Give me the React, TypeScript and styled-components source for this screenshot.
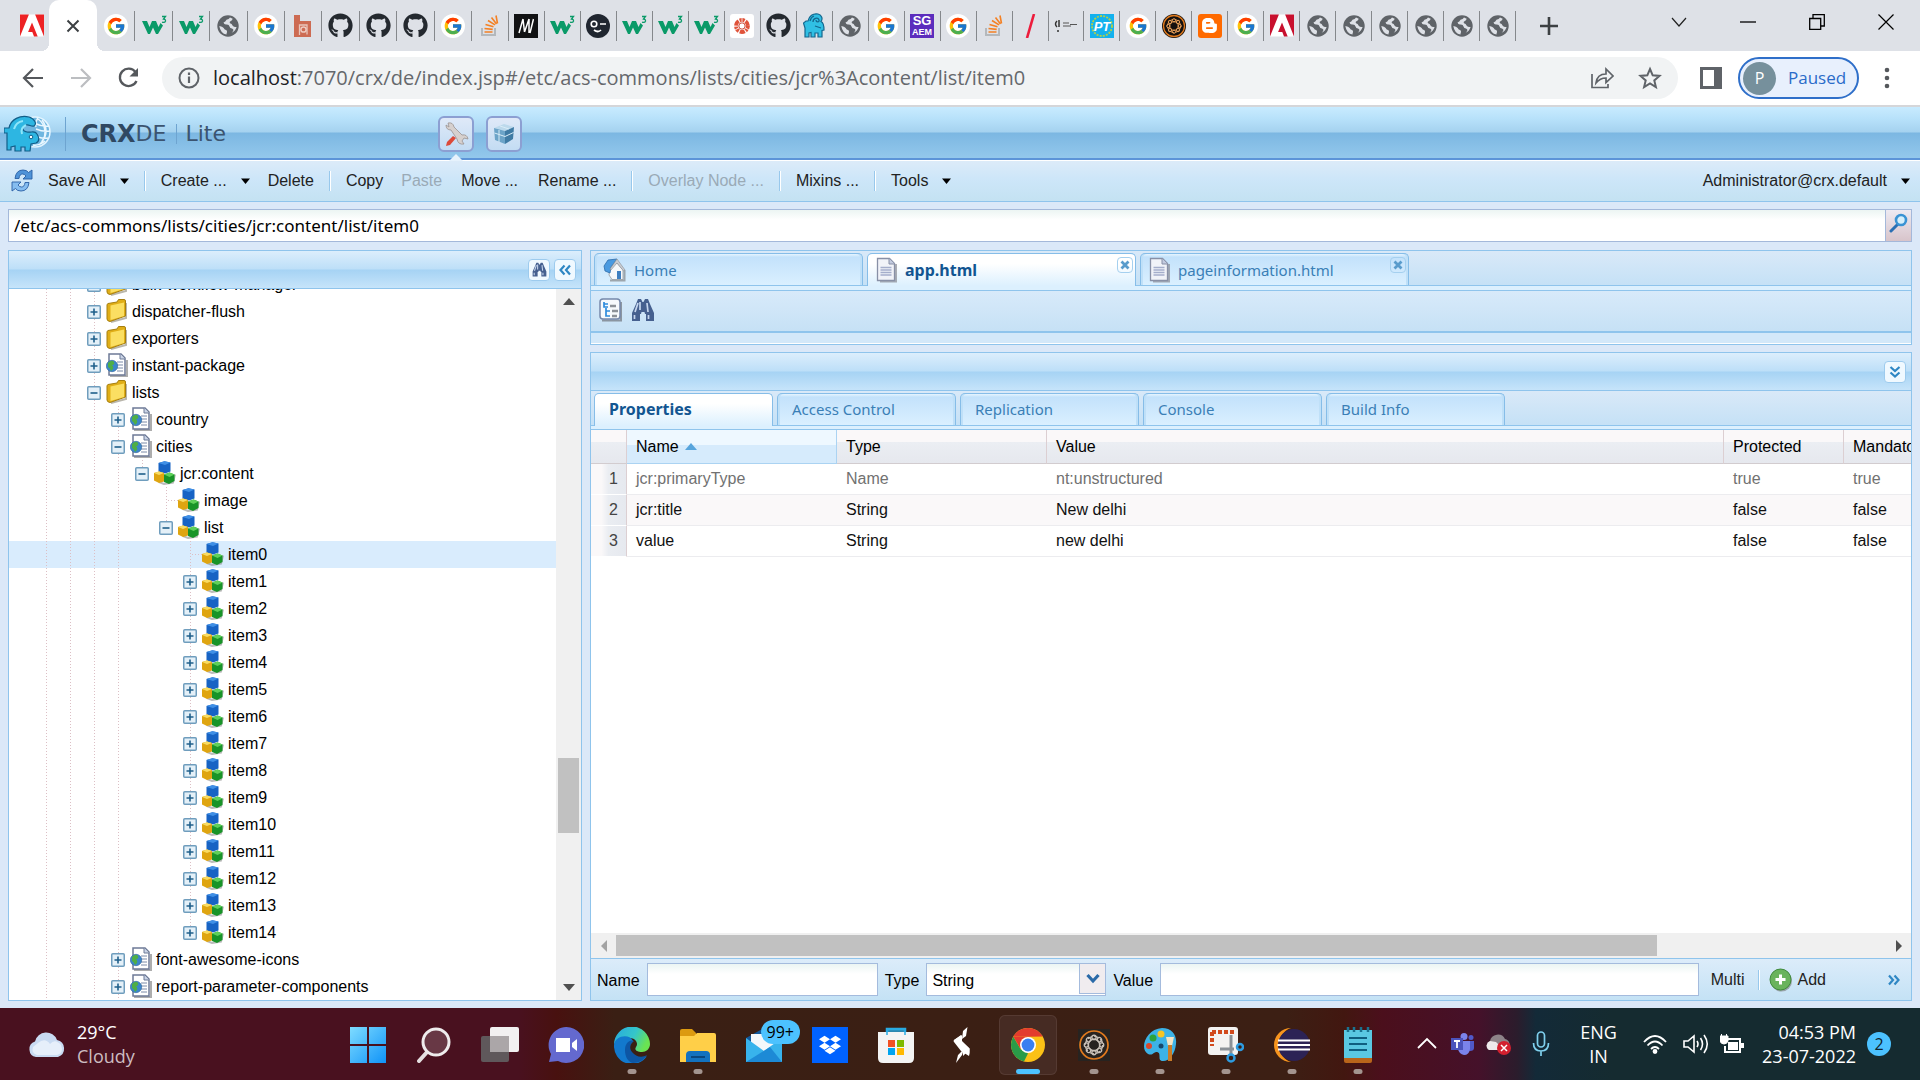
import React from "react";
import styled, { createGlobalStyle, css } from "styled-components";
import { FcGoogle } from "react-icons/fc";
import { FaGithub, FaBloggerB, FaDropbox } from "react-icons/fa";

const ARIAL = '"Liberation Sans", Arial, sans-serif';
const SEGOE = '"Open Sans", "Noto Sans", sans-serif';
const TAHOMA = '"Noto Sans", Tahoma, sans-serif';
const LINE = "#8fc4ec";

const GlobalStyle = createGlobalStyle`
  * { box-sizing: border-box; }
  html, body { margin: 0; padding: 0; }
  body { font-family: ${ARIAL}; font-size: 16px; color: #000; overflow: hidden; }
  button, input, select { font: inherit; color: inherit; margin: 0; }
  button { background: none; border: 0; padding: 0; cursor: pointer; }
  svg { display: block; flex: none; }
`;

const Screen = styled.div`
  display: flex;
  flex-direction: column;
  height: 100vh;
  background: #dbe8f8;
`;

/* ---------- browser chrome ---------- */

const TabStrip = styled.div`
  display: flex;
  flex: none;
  height: 51px;
  background: #dee1e7;
`;
const PinnedTab = styled.button`
  display: flex;
  justify-content: flex-end;
  align-items: center;
  width: 49px;
  padding-right: 5px;
`;
const ActiveTab = styled.div`
  position: relative;
  display: flex;
  align-items: center;
  justify-content: center;
  width: 48px;
  background: #fff;
  border-radius: 10px 10px 0 0;
  &::before,
  &::after {
    content: "";
    position: absolute;
    bottom: 0;
    width: 8px;
    height: 8px;
  }
  &::before {
    right: 100%;
    background: radial-gradient(circle at 0 0, transparent 8px, #fff 8px);
  }
  &::after {
    left: 100%;
    background: radial-gradient(circle at 100% 0, transparent 8px, #fff 8px);
  }
`;
const TabGroup = styled.div<{ $w: number }>`
  display: flex;
  flex: 0 1 ${(p) => p.$w}px;
  align-items: center;
`;
const BrowserTab = styled.button`
  display: flex;
  flex: 1 1 0;
  min-width: 0;
  height: 30px;
  align-items: center;
  justify-content: center;
  border-right: 1px solid #85888c;
  &:first-child {
    padding-left: 1px;
  }
`;
const NewTab = styled.button`
  display: flex;
  align-items: center;
  margin-left: 24px;
`;
const WindowControls = styled.div`
  display: flex;
  align-items: center;
  height: 43px;
  margin-left: auto;
`;
const WindowButton = styled.button`
  display: flex;
  width: 69px;
  height: 43px;
  align-items: center;
  justify-content: center;
`;
const Round = styled.span<{ $bg: string }>`
  display: flex;
  width: 24px;
  height: 24px;
  align-items: center;
  justify-content: center;
  border-radius: 50%;
  background: ${(p) => p.$bg};
`;
const Square = styled.span<{ $bg: string; $r?: number }>`
  display: flex;
  flex-direction: column;
  width: 24px;
  height: 24px;
  align-items: center;
  justify-content: center;
  border-radius: ${(p) => p.$r ?? 0}px;
  background: ${(p) => p.$bg};
  color: #fff;
  font: bold 13px/12px ${ARIAL};
`;
const SquareNote = styled.small`
  font: bold 9px/10px ${ARIAL};
`;

const AddressRow = styled.div`
  display: flex;
  flex: none;
  align-items: center;
  height: 56px;
  padding: 0 27px 0 21px;
  background: #fff;
  border-bottom: 2px solid #d5d6d9;
`;
const NavButtons = styled.div`
  display: flex;
  width: 141px;
  gap: 24px;
`;
const Omnibox = styled.div`
  display: flex;
  flex: 1;
  height: 42px;
  align-items: center;
  gap: 13px;
  padding: 0 16px;
  border-radius: 21px;
  background: #f1f3f4;
`;
const Url = styled.div`
  flex: 1;
  font: 20px/28px ${SEGOE};
  color: #65686c;
  white-space: nowrap;
`;
const UrlHost = styled.span`
  color: #202124;
`;
const OmniActions = styled.div`
  display: flex;
  gap: 24px;
`;
const Profile = styled.button`
  display: flex;
  align-items: center;
  gap: 12px;
  width: 121px;
  height: 42px;
  margin: 0 22px 0 16px;
  padding-left: 3px;
  border: 2px solid #2f6fc9;
  border-radius: 21px;
  background: #e8f0fd;
  color: #2a6bc9;
  font: 17px/24px ${SEGOE};
`;
const Avatar = styled.span`
  width: 33px;
  height: 33px;
  border-radius: 50%;
  background: #76909c;
  color: #fff;
  font: 16px/33px ${SEGOE};
  text-align: center;
`;
const SideIcon = styled.button`
  margin-left: 22px;
`;

/* ---------- CRXDE header ---------- */

const CrxHeader = styled.header`
  display: flex;
  flex: none;
  align-items: center;
  height: 53px;
  padding: 2px 4px 0;
  border-bottom: 2px solid #5c94d8;
  background: linear-gradient(#c8ebff 0, #b7e1fa 12px, #a5d2ef 25px, #7cb7e2 26px, #93c8ec 100%);
`;
const Brand = styled.div`
  display: flex;
  align-items: center;
  width: 434px;
  color: #3b5470;
  font: 22px/36px "DejaVu Sans", Verdana, sans-serif;
`;
const BrandStrong = styled.b`
  color: #2f4862;
  font-size: 24px;
`;
const BrandRule = styled.span<{ $h: number; $l: number; $r: number }>`
  width: 1px;
  height: ${(p) => p.$h}px;
  margin: 0 ${(p) => p.$r}px 0 ${(p) => p.$l}px;
  background: #6ea4d0;
`;
const ModeTile = styled.button<{ $on?: boolean }>`
  position: relative;
  display: flex;
  width: 36px;
  height: 36px;
  margin-right: 12px;
  align-items: center;
  justify-content: center;
  border: 2px solid #8c9fd2;
  border-radius: 6px;
  background: linear-gradient(#dfe9f8, #c3dcf3);
  ${(p) =>
    p.$on &&
    css`
      &::after {
        content: "";
        position: absolute;
        left: 9px;
        bottom: -11px;
        border: 7px solid transparent;
        border-top: 0;
        border-bottom-color: #e6f2fc;
      }
    `}
`;

const Toolbar = styled.div`
  display: flex;
  flex: none;
  align-items: center;
  height: 42px;
  padding: 0 10px;
  border-top: 1px solid #fff;
  border-bottom: 1px solid ${LINE};
  background: linear-gradient(#dcebf9, #cde6f9 45%, #c4e2f2);
`;
const ToolButton = styled.button<{ $l?: number; $r?: number }>`
  display: flex;
  align-items: center;
  gap: 14px;
  padding: 0 ${(p) => p.$r ?? 15}px 0 ${(p) => p.$l ?? 15}px;
  color: #222;
  font: 16px/24px ${ARIAL};
  white-space: nowrap;
  &:disabled {
    color: #9aaab6;
  }
`;
const Sep = styled.span`
  width: 2px;
  height: 20px;
  background: linear-gradient(90deg, #98c8ec 50%, #fff 50%);
`;
const Spacer = styled.span`
  flex: 1;
`;

const PathRow = styled.form`
  display: flex;
  flex: none;
  height: 33px;
  margin: 7px 8px 8px;
  border: 1px solid #a4b8da;
`;
const PathInput = styled.input`
  flex: 1;
  min-width: 0;
  border: 0;
  padding: 0 5px;
  outline: 0;
  background: linear-gradient(#ecf5f3, #fff 10px);
  font: 17px/24px ${TAHOMA};
`;
const PathGo = styled.button`
  display: flex;
  width: 26px;
  align-items: flex-start;
  justify-content: center;
  padding-top: 3px;
  border-left: 1px solid #a4b8da;
  background: linear-gradient(#edeaf2, #d8c4ca);
`;

/* ---------- work area ---------- */

const Work = styled.main`
  display: flex;
  flex: 1;
  min-height: 0;
  gap: 8px;
  padding: 0 8px 7px;
`;
const Panel = styled.section<{ $w?: number; $grow?: boolean }>`
  display: flex;
  flex-direction: column;
  min-width: 0;
  min-height: 0;
  ${(p) => p.$w && `flex: 0 0 ${p.$w}px;`}
  ${(p) => p.$grow && "flex: 1;"}
  border: 1px solid ${LINE};
`;
const PanelHeader = styled.div`
  display: flex;
  flex: none;
  align-items: center;
  justify-content: flex-end;
  gap: 4px;
  height: 38px;
  padding-right: 5px;
  border-bottom: 1px solid ${LINE};
  background: linear-gradient(#dceefc 0, #bddff8 18px, #a6d3f4 19px, #c6e4fa 100%);
`;
const HeaderTool = styled.button`
  display: flex;
  width: 22px;
  height: 22px;
  align-items: center;
  justify-content: center;
  border: 1px solid #9dcbee;
  border-radius: 4px;
  background: #f0f9ff;
`;
const TreeBody = styled.div`
  display: flex;
  flex: 1;
  min-height: 0;
  background: #fff;
`;
const TreeList = styled.ul`
  display: flex;
  flex: 1;
  flex-direction: column;
  justify-content: flex-end;
  overflow: hidden;
  margin: 0;
  padding: 0;
  list-style: none;
`;
const TreeRow = styled.li<{ $on?: boolean }>`
  display: flex;
  flex: none;
  height: 27px;
  align-items: center;
  padding-left: 25px;
  background: ${(p) => (p.$on ? "#d9ecfd" : "transparent")};
`;
const dots = "repeating-linear-gradient(#dcbfc5 0 1px, transparent 1px 3px)";
const Guide = styled.span<{ $line?: boolean; $half?: boolean }>`
  display: flex;
  flex: none;
  width: 24px;
  height: 27px;
  align-items: center;
  justify-content: center;
  background: ${(p) => (p.$line ? dots : "none")} 12px 0 / 1px ${(p) => (p.$half ? "14px" : "100%")} no-repeat;
`;
const Stub = styled.span`
  width: 10px;
  height: 1px;
  margin-left: 14px;
  background: repeating-linear-gradient(90deg, #dcbfc5 0 1px, transparent 1px 3px);
`;
const NodeIcon = styled.span`
  width: 24px;
  height: 26px;
`;
const NodeLabel = styled.a`
  margin-left: 2px;
  color: #000;
  text-decoration: none;
  font: 16px/24px ${ARIAL};
  white-space: nowrap;
`;
const VScroll = styled.div`
  display: flex;
  flex-direction: column;
  align-items: center;
  width: 25px;
  padding: 7px 0;
  background: #f0f0f0;
`;
const VTrack = styled.div<{ $f: number }>`
  flex: ${(p) => p.$f};
`;
const VThumb = styled.div`
  width: 21px;
  height: 75px;
  background: #c1c1c1;
`;

const RightColumn = styled.div`
  display: flex;
  flex: 1;
  flex-direction: column;
  min-width: 0;
  gap: 7px;
`;
const TabBar = styled.div`
  display: flex;
  flex: none;
  gap: 4px;
  padding: 2px 3px 0;
  border-bottom: 1px solid ${LINE};
  background: linear-gradient(#d9e9f8, #c5e1f6);
`;
const PageTab = styled.div<{ $on?: boolean; $w: number }>`
  display: flex;
  width: ${(p) => p.$w}px;
  height: ${(p) => (p.$on ? 33 : 32)}px;
  margin-bottom: ${(p) => (p.$on ? -1 : 0)}px;
  align-items: center;
  padding: 0 2px 0 8px;
  border: 1px solid #86bde8;
  border-bottom: 0;
  border-radius: 5px 5px 0 0;
  background: ${(p) =>
    p.$on ? "linear-gradient(#fff 30%, #dcf0fe)" : "linear-gradient(#e6f5ff 0, #c3e2fb 3px, #daf0ff)"};
  box-shadow: ${(p) => (p.$on ? "none" : "inset -2px 0 0 #bfe0f8, inset 2px 0 0 #bfe0f8")};
`;
const TabLabel = styled.button<{ $on?: boolean }>`
  display: flex;
  flex: 1;
  align-items: center;
  gap: 7px;
  color: ${(p) => (p.$on ? "#125591" : "#3a7fb6")};
  font: ${(p) => (p.$on ? "bold 16px" : "15px")}/24px ${TAHOMA};
  white-space: nowrap;
`;
const CloseTab = styled.button`
  display: flex;
  align-self: flex-start;
  width: 16px;
  height: 16px;
  margin-top: 3px;
  align-items: center;
  justify-content: center;
  border: 1px solid #a5d0ef;
  border-radius: 4px;
`;
const Strip = styled.div<{ $h: number }>`
  flex: none;
  height: ${(p) => p.$h}px;
  border-bottom: 1px solid ${LINE};
  background: #dcf0fe;
`;
const EditorTools = styled.div`
  display: flex;
  flex: none;
  height: 42px;
  align-items: center;
  gap: 8px;
  padding: 0 8px 2px;
  border-bottom: 2px solid ${LINE};
  background: linear-gradient(#d8eafa, #c6e1f5);
`;
const EditorRest = styled.div`
  height: 11px;
  border-bottom: 1px solid #fff;
  background: #d3e8f9;
`;

/* ---------- properties grid ---------- */

const GridArea = styled.div`
  flex: 1;
  min-height: 0;
  overflow: hidden;
  background: #fff;
`;
const Grid = styled.table`
  width: calc(100% + 53px);
  table-layout: fixed;
  border-collapse: separate;
  border-spacing: 0;
`;
const HeadCell = styled.th<{ $w?: number; $sorted?: boolean }>`
  width: ${(p) => (p.$w ? `${p.$w}px` : "auto")};
  height: 34px;
  padding: 1px 9px 0;
  border-right: 1px solid ${(p) => (p.$sorted ? "#abd3f2" : "#dccfd2")};
  border-bottom: 1px solid ${(p) => (p.$sorted ? "#abd3f2" : "#d2cccf")};
  background: ${(p) =>
    p.$sorted
      ? "linear-gradient(#eef8ff 45%, #d6ebfc 46%)"
      : "linear-gradient(#faf8f9 35%, #ebeef3 36%, #e6e8ee)"};
  font: 16px/24px ${ARIAL};
  text-align: left;
`;
const SortMark = styled.span`
  display: inline-block;
  margin-left: 6px;
  vertical-align: 2px;
  border: 6px solid transparent;
  border-top: 0;
  border-bottom: 7px solid #58a5dc;
`;
const GridRow = styled.tr<{ $alt?: boolean; $muted?: boolean }>`
  background: ${(p) => (p.$alt ? "#faf8f9" : "#fff")};
  color: ${(p) => (p.$muted ? "#717171" : "#111")};
`;
const Cell = styled.td`
  height: 31px;
  padding: 0 9px;
  border-bottom: 1px solid #ececef;
  font: 16px/24px ${ARIAL};
  white-space: nowrap;
`;
const NumCell = styled(Cell)`
  padding: 0 8px 0 0;
  border-right: 1px solid #dccfd2;
  border-bottom-color: #fff;
  background: linear-gradient(90deg, #faf8f9 30%, #eaedf2 50%, #e6e9ef);
  color: #444;
  text-align: right;
`;
const HScroll = styled.div`
  display: flex;
  flex: none;
  align-items: center;
  height: 25px;
  padding: 0 8px;
  background: #f0f0f0;
`;
const HTrack = styled.div`
  flex: 1;
  height: 21px;
  margin: 0 5px;
`;
const HThumb = styled.div`
  width: 82%;
  height: 21px;
  background: #c1c1c1;
`;
const PropForm = styled.form`
  display: flex;
  flex: none;
  align-items: center;
  height: 42px;
  gap: 7px;
  padding: 0 10px 0 6px;
  border-top: 1px solid ${LINE};
  background: linear-gradient(#dcecfa, #c4e2f5);
`;
const FieldLabel = styled.label`
  padding-top: 2px;
  font: 16px/24px ${ARIAL};
`;
const Field = styled.input<{ $w?: number }>`
  ${(p) => (p.$w ? `flex: 0 1 ${p.$w}px;` : "flex: 1;")}
  min-width: 0;
  height: 33px;
  padding: 0 5px;
  border: 1px solid #a4bbdd;
  background: linear-gradient(#ebf5f3, #fff 10px);
`;
const SelectBox = styled.div`
  position: relative;
  flex: 0 1 180px;
`;
const Select = styled.select`
  display: block;
  width: 100%;
  height: 33px;
  padding: 2px 32px 0 5px;
  appearance: none;
  border: 1px solid #a4bbdd;
  border-radius: 0;
  background: linear-gradient(#ebf5f3, #fff 10px);
  font: 16px/24px ${ARIAL};
`;
const SelectTrigger = styled.span`
  position: absolute;
  top: 0;
  right: 0;
  display: flex;
  width: 27px;
  height: 31px;
  align-items: center;
  justify-content: center;
  border: 1px solid #a4bbdd;
  background: #f0ecef;
  pointer-events: none;
`;
const AddButton = styled(ToolButton).attrs({ $l: 2, $r: 0 })`
  gap: 5px;
`;
const MoreButton = styled.button`
  margin-left: 54px;
`;

/* ---------- taskbar ---------- */

const Taskbar = styled.footer`
  display: flex;
  flex: none;
  height: 72px;
  padding-right: 29px;
  background: linear-gradient(
    90deg,
    #49111f 0,
    #49111f 27%,
    #48110f 29%,
    #3a1f14 32%,
    #3c1f14 67%,
    #421710 70%,
    #4b0f1c 72%,
    #45112a 77%,
    #2b1c2c 79%,
    #132a38 80%,
    #152b30 84%,
    #152b30 100%
  );
  color: #fff;
  font: 18px/24px ${SEGOE};
`;
const Weather = styled.button`
  display: flex;
  align-items: center;
  gap: 11px;
  width: 335px;
  padding-left: 28px;
  text-align: left;
`;
const Dim = styled.span`
  display: block;
  color: #cdbcc1;
`;
const AppButton = styled.button<{ $on?: boolean }>`
  position: relative;
  display: flex;
  width: 58px;
  height: 60px;
  margin: 7px 4px 5px;
  align-items: center;
  justify-content: center;
  border-radius: 6px;
  ${(p) => p.$on && "background: #462b23; box-shadow: inset 0 0 0 1px #553a32;"}
`;
const Running = styled.span<{ $on?: boolean }>`
  position: absolute;
  left: 50%;
  bottom: 1px;
  width: ${(p) => (p.$on ? 24 : 9)}px;
  height: 5px;
  transform: translateX(-50%);
  border-radius: 3px;
  background: ${(p) => (p.$on ? "#4cc2ff" : "#a3948f")};
`;
const Badge = styled.span`
  position: absolute;
  top: 5px;
  right: -7px;
  padding: 0 6px;
  border-radius: 12px;
  background: #4cc2ff;
  color: #000;
  font: 16px/24px ${SEGOE};
`;
const Tray = styled.div`
  display: flex;
  align-items: center;
  margin-left: auto;
`;
const TrayButton = styled.button<{ $w: number }>`
  display: flex;
  width: ${(p) => p.$w}px;
  justify-content: center;
  text-align: center;
`;
const Clock = styled.button`
  width: 106px;
  text-align: right;
`;
const Notice = styled.span`
  width: 24px;
  height: 24px;
  margin-left: 11px;
  border-radius: 50%;
  background: #4cc2ff;
  color: #10242c;
  font-size: 16px;
  text-align: center;
`;

/* ---------- favicons ---------- */

const Adobe = ({ c = "#ed2224" }: { c?: string }) => (
  <svg width="24" height="23" viewBox="0 0 24 22">
    <path fill="#fff" d="M0 0h24v22H0z" />
    <path fill={c} d="M0 0h8.900L0 22zM15.100 0H24v22zM12 8l5.700 14H14l-1.700-4.400H8.100z" />
  </svg>
);
const W3 = () => (
  <svg width="26" height="22" viewBox="0 0 26 22">
    <path d="M1 6h5l2.500 6L11 6h4l2.500 6 2-4 2.500 2.500L17 19h-2l-3-6.500L9 19H7z" fill="#0a9a68" />
    <path d="M21 1.500h3.500L22.500 4q2.300.2 2 2.200-.7 1.600-3.500.9" fill="none" stroke="#0a9a68" strokeWidth="1.300" />
  </svg>
);
const Globe = () => (
  <svg width="22" height="22" viewBox="0 0 22 22">
    <circle cx="11" cy="11" r="10.700" fill="#5f6368" />
    <path d="M13 2.500q-1 2-3.500 2.300Q8.500 7 6.500 7.500q.5 2 2.500 2 3-.5 3.500 2 .5 2 2.500 2 2 .5 1.200 2.500l-1.500 1.700Q18.500 16 19.600 12q-2.500.5-4.100-1.500-.5-2-2.500-2.200-1-1.300.5-2 1.800-.8 2.200-2.500z" fill="#dee1e7" />
    <path d="M2.300 11q3.200.3 4.400 2 .5 1.500 2.200 2 1.600.5 1.100 2.300-.6 1.300-.5 2.300Q3.500 18.500 2.300 11z" fill="#dee1e7" />
  </svg>
);
const Google = () => (
  <Round $bg="#fff">
    <FcGoogle size={20} />
  </Round>
);
const GitHub = () => <FaGithub size={25} color="#24292f" />;
const Stack = () => (
  <svg width="20" height="22" viewBox="0 0 20 22">
    <path d="M2 13v7h13v-7" fill="none" stroke="#b4b8bc" strokeWidth="2" />
    <path d="M4.500 17h8M4.500 13.500l8.200.9M5.500 9.500l8 2.300M8 5.500l7 4.400M11.500 2.500l5 6.500M16 .5l1.500 8" stroke="#f48024" strokeWidth="1.600" />
  </svg>
);
const Baeldung = () => (
  <svg width="18" height="22" viewBox="0 0 18 22">
    <path fill="#cd6b53" d="M0 0h6v6h11v16H0z" />
    <path d="M5.500 20V10H13v9.500" fill="none" stroke="#e9c6bc" strokeWidth="1.300" />
    <circle cx="9.500" cy="14.500" r="2.600" fill="#cd6b53" stroke="#eecac0" strokeWidth="1.500" />
  </svg>
);
const MLogo = () => (
  <Square $bg="#111214">
    <svg width="16" height="16" viewBox="0 0 16 16">
      <path d="M1 15L5 1M5 1l1.500 13M11 1L6.500 14M11 1v14M15.500 1L12 15" fill="none" stroke="#fff" strokeWidth="1.500" />
    </svg>
  </Square>
);
const Coder = () => (
  <svg width="24" height="24" viewBox="0 0 24 24">
    <circle cx="12" cy="12" r="12" fill="#202630" />
    <circle cx="8" cy="10" r="2.800" fill="none" stroke="#fff" strokeWidth="1.600" />
    <path d="M14 10h6M8 16q4 3 7 0" fill="none" stroke="#fff" strokeWidth="1.700" />
  </svg>
);
const RedGear = () => (
  <Square $bg="#fff" $r={3}>
    <svg width="18" height="18" viewBox="0 0 18 18">
      <circle cx="9" cy="9" r="6" fill="none" stroke="#e0533a" strokeWidth="3.800" strokeDasharray="5.200 1.080" />
      <circle cx="9" cy="9" r="3.200" fill="none" stroke="#c8402c" />
      <path d="M9 5.500V0M12 10.800l5 2.700M6 10.800l-5 2.700" stroke="#fff" strokeWidth=".8" />
    </svg>
  </Square>
);
const Rhino = ({ w = 22 }: { w?: number }) => (
  <svg width={w} height={w + 3} viewBox="0 0 22 25">
    <path d="M5 8C6 3 10 0 15 1c4 1 5 5 3 7.500 2.500 1 3 4 3 8.500l-2 .5V24h-4v-4h-3v4H8v-4.500l-2 .5v4H2v-9l-1.500-5L3 8z" fill="#30bfe4" stroke="#14678e" strokeWidth="1.200" />
    <path d="M10 9c0-4 5-5 6-2 .8 2.500-3 2.500-3 0M12 13l6 2M7 8q1-4 4-5" fill="none" stroke="#14678e" strokeWidth="1.300" />
  </svg>
);
const Slash = () => (
  <svg width="12" height="24" viewBox="0 0 12 24">
    <path d="M10 0L3 24" stroke="#ed1c3c" strokeWidth="2.600" />
  </svg>
);
const Bulb = () => (
  <svg width="24" height="14" viewBox="0 0 24 14">
    <path d="M3 2q-3 3 0 6M5 1v7M4 11v2" stroke="#333" strokeWidth="1.500" fill="none" />
    <path d="M9 4h6M9 7h8M16 5.500h7" stroke="#555" strokeWidth="1.200" />
  </svg>
);
const PT = () => (
  <svg width="24" height="24" viewBox="0 0 24 24">
    <path fill="#13b1ee" d="M0 0h24v24H0z" />
    <circle cx="12" cy="12" r="10" fill="none" stroke="#b6cf44" strokeWidth="1.800" strokeDasharray="2 1.200" />
    <text x="12" y="17" fill="#fff" fontFamily="Liberation Sans" fontStyle="italic" fontWeight="bold" fontSize="13" textAnchor="middle">PT</text>
  </svg>
);
const Aem = ({ size = 24, box = false }: { size?: number; box?: boolean }) => (
  <svg width={size} height={size} viewBox="0 0 24 24">
    {box ? <path fill="#272320" d="M0 0h24v24H0z" /> : <circle cx="12" cy="12" r="12" fill="#15110f" />}
    <circle cx="12" cy="12" r="10.500" fill="none" stroke="#e07a1e" strokeWidth="1.300" />
    <g fill="none" stroke={box ? "#c9c1b8" : "#e8a05a"} strokeWidth="1">
      <circle cx="12" cy="12" r="6.500" strokeDasharray="3.400 1.700" />
      <circle cx="12" cy="12" r="4.300" />
      {[0, 45, 90, 135, 180, 225, 270, 315].map((a) => (
        <circle key={a} cx="12" cy="6.300" r="1.600" transform={`rotate(${a} 12 12)`} />
      ))}
    </g>
  </svg>
);

const stroke = (d: string, size: number, w: number, c = "#000", vb = 24) => (
  <svg width={size} height={size} viewBox={`0 0 ${vb} ${vb}`}>
    <path d={d} fill="none" stroke={c} strokeWidth={w} />
  </svg>
);

/* ---------- application icons ---------- */

const Caret = () => (
  <svg width="9" height="6" viewBox="0 0 9 6">
    <path d="M0 .5h9L4.500 6z" fill="#000" />
  </svg>
);
const Refresh = () => (
  <svg width="24" height="26" viewBox="0 0 24 26">
    <path d="M5 10.500Q6 2 13 2q4 0 5.500 2.500L22 2v9h-9l3-3q-1.500-2-3.500-2Q9.500 6 9 10.500z" fill="#4f93d8" stroke="#285ea4" strokeWidth=".9" />
    <path d="M19 14.500Q18 23 11 23q-4 0-5.500-2.500L2 23v-9h9l-3 3q1.500 2 3.500 2 3 0 3.500-4.500z" fill="#85bdf0" stroke="#285ea4" strokeWidth=".9" />
  </svg>
);
const Tools = () => (
  <svg width="26" height="26" viewBox="0 0 26 26">
    <path d="M5 2q5-1 6 4l8 8q5-1 6 4l-4-1-2 3 2 3q-6 1-7-5L8 9Q3 9 3 4l3 2z" fill="#d6d0ce" stroke="#9b9392" strokeWidth=".8" />
    <path d="M10 15l3 2-6 7-4 1 1-4z" fill="#dc4a39" />
  </svg>
);
const Box3d = () => (
  <svg width="24" height="24" viewBox="0 0 24 24">
    <path d="M2 6l10-4 10 3-9 4z" fill="#bcd9ec" />
    <path d="M2 6l11 3v13L3 18z" fill="#6ca4c8" />
    <path d="M22 5l-9 4v13l8-5z" fill="#3f7ba4" />
    <path d="M2.500 11l10.500 3.500 8.500-4M8 4l9 3M7 8v12" stroke="#d8ecf7" fill="none" />
  </svg>
);
const Binoculars = ({ size = 24 }: { size?: number }) => (
  <svg width={size} height={size} viewBox="0 0 24 24">
    <path d="M7 1h3l1.500 3h1L14 1h3l2 5 4 9v8h-8v-7h-1l-.5-2h-3L10 16H9v7H1v-8l4-9z" fill="#46608f" />
    <path d="M7 5l-3 9M16 5l1 9M3.500 17v4M17.500 17v4M9 4v8" stroke="#c6d6ee" strokeWidth="1.700" />
  </svg>
);
const Chevrons = ({ r = 0 }: { r?: number }) => (
  <svg width="14" height="14" viewBox="0 0 14 14">
    <path d="M6.500 2.500L2.500 7l4 4.500M12 2.500L8 7l4 4.500" fill="none" stroke="#2f87c4" strokeWidth="2.200" transform={`rotate(${r} 7 7)`} />
  </svg>
);
const Magnifier = () => (
  <svg width="20" height="20" viewBox="0 0 20 20">
    <path d="M2 18l7-7" stroke="#2a6fb4" strokeWidth="3" strokeLinecap="round" />
    <circle cx="12" cy="7" r="5" fill="#d6effb" stroke="#3a93d4" strokeWidth="2.600" />
  </svg>
);
const Expander = ({ open }: { open?: boolean }) => (
  <svg width="14" height="14" viewBox="0 0 14 14">
    <rect x=".75" y=".75" width="12.500" height="12.500" rx="1" fill="#e4f0f8" stroke="#6f9dbd" strokeWidth="1.500" />
    <path d={open ? "M3.500 7h7" : "M3.500 7h7M7 3.500v7"} stroke="#1f5f8a" strokeWidth="1.600" />
  </svg>
);
const Folder = () => (
  <svg width="22" height="24" viewBox="0 0 22 24">
    <path d="M5 23l15-4V4" stroke="#8b8575" strokeWidth="2" fill="none" opacity=".6" />
    <path d="M1 6q0-1 1-1.500L11 3l1.500-2.500L18 .5q1.500 0 1.500 1.500v15L4 22.500Q1 22 1 20z" fill="#e0ae17" stroke="#a67f10" strokeWidth="1" />
    <path d="M4.500 6.500L18 3.500V17L4.500 21z" fill="#fbdf62" />
  </svg>
);
const PageGlobe = () => (
  <svg width="22" height="24" viewBox="0 0 22 24">
    <path d="M4 23h17V7" stroke="#777" strokeWidth="2" fill="none" opacity=".6" />
    <path d="M3 1h12l4 4v17H3z" fill="#fff" stroke="#6d7a97" strokeWidth="1.500" />
    <path d="M14 1v5h5" fill="#cbd5e8" stroke="#6d7a97" />
    <path d="M11 9h6M11 12h6M11 15h6M11 18h6" stroke="#7a8aa8" />
    <circle cx="6" cy="13" r="5.700" fill="#3b86cb" stroke="#2b639b" strokeWidth=".6" />
    <path d="M2 10q4-4 6-1 1 3-2 3 3 3-1 6-1-3-3-4z" fill="#4fae46" />
  </svg>
);
const Cubes = () => (
  <svg width="22" height="24" viewBox="0 0 22 24">
    <path d="M5 21l5 2 9-1.500 2-8" fill="none" stroke="#777" strokeWidth="2" opacity=".5" />
    <path d="M4.500 2l6-1.700 6 1.200v9L11 12.500l-6.500-2z" fill="#1763c4" />
    <path d="M4.500 2l6-1.700 6 1.200L11 4z" fill="#3f8fe6" />
    <path d="M0 12l5-1.500 5 1.500v8.500l-5 1.500-5-2.500z" fill="#dfa510" />
    <path d="M0 12l5-1.500 5 1.500-5 2z" fill="#f9dc63" />
    <path d="M10 13.500l5.500-2 5 2V20L15 23l-5-2z" fill="#189428" />
    <path d="M10 13.500l5.500-2 5 2-5 2.500z" fill="#5fd05a" />
  </svg>
);
const House = () => (
  <svg width="24" height="24" viewBox="0 0 24 24">
    <path d="M7 22.500h14.500V12" fill="none" stroke="#777" strokeWidth="2" opacity=".6" />
    <path d="M7 9l7-4 6 7v9.500H9L6 17z" fill="#f7f8fa" stroke="#93999f" strokeWidth=".8" />
    <path d="M1 8L5 2l9-1-6 8-1 6-5-2z" fill="#4a9ae0" stroke="#2d6ca9" strokeWidth=".8" />
    <path d="M14 1l8 11-1.500 1L14 5l-6 7-1-1z" fill="#c9ccd2" stroke="#888e96" strokeWidth=".6" />
    <path d="M14 13h4v8h-4z" fill="#3f7fc0" />
  </svg>
);
const Doc = () => (
  <svg width="22" height="26" viewBox="0 0 22 26">
    <path d="M4 24.500h16V7" stroke="#8a8c94" strokeWidth="2" fill="none" opacity=".7" />
    <path d="M1.500 1.500h12l5 5v17h-17z" fill="#f1f3f8" stroke="#8890a6" strokeWidth="1.300" />
    <path d="M13 1.500V7h5.500" fill="#c3cbe0" stroke="#8890a6" />
    <path d="M4.500 10.500h11M4.500 13h11M4.500 15.500h11M4.500 18h11" stroke="#a5aecb" strokeWidth="1.500" />
  </svg>
);
const TreeDoc = () => (
  <svg width="24" height="24" viewBox="0 0 24 24">
    <path d="M3 22.500h19V4" stroke="#6f747c" strokeWidth="2" fill="none" opacity=".7" />
    <rect x="1" y="1" width="20" height="20" rx="3" fill="#f7fafd" stroke="#7588aa" strokeWidth="1.500" />
    <path d="M5 4v5h4M5 6h4M7 10v8h4M7 13h4" fill="none" stroke="#2e8bdc" strokeWidth="1.700" />
    <path d="M11 8h6M13 13h6M13 18h5" stroke="#8d9299" strokeWidth="2.400" />
  </svg>
);

/* ---------- data ---------- */

const wideTabs = [Google, W3, W3, Globe, Google, Baeldung, GitHub, GitHub, GitHub, Google];
const SG = () => (
  <Square $bg="#5c2dbd">
    <span>SG</span>
    <SquareNote>AEM</SquareNote>
  </Square>
);
const Blogger = () => (
  <Square $bg="#ff6a00" $r={3}>
    <FaBloggerB size={17} />
  </Square>
);
const DarkAdobe = () => <Adobe c="#c8102e" />;
const Crx = () => <Rhino />;
const AemDisc = () => <Aem />;
const narrowTabs = [
  Stack, MLogo, W3, Coder, W3, W3, W3, RedGear, GitHub, Crx, Globe, Google, SG, Google, Stack, Slash,
  Bulb, PT, Google, AemDisc, Blogger, Google, DarkAdobe, Globe, Globe, Globe, Globe, Globe, Globe,
];

type Node = { name: string; depth: number; icon: React.FC; open?: boolean; leaf?: boolean; last?: boolean };
const nodes: Node[] = [
  { name: "bulk-workflow-manager", depth: 2, icon: Folder },
  { name: "dispatcher-flush", depth: 2, icon: Folder },
  { name: "exporters", depth: 2, icon: Folder },
  { name: "instant-package", depth: 2, icon: PageGlobe },
  { name: "lists", depth: 2, icon: Folder, open: true },
  { name: "country", depth: 3, icon: PageGlobe },
  { name: "cities", depth: 3, icon: PageGlobe, open: true },
  { name: "jcr:content", depth: 4, icon: Cubes, open: true, last: true },
  { name: "image", depth: 5, icon: Cubes, leaf: true },
  { name: "list", depth: 5, icon: Cubes, open: true, last: true },
  ...Array.from({ length: 15 }, (_, i) => ({
    name: `item${i}`, depth: 6, icon: Cubes, leaf: i === 0, last: i === 14,
  })),
  { name: "font-awesome-icons", depth: 3, icon: PageGlobe },
  { name: "report-parameter-components", depth: 3, icon: PageGlobe },
];

const rows = [
  ["jcr:primaryType", "Name", "nt:unstructured", "true", "true"],
  ["jcr:title", "String", "New delhi", "false", "false"],
  ["value", "String", "new delhi", "false", "false"],
];

/* ---------- taskbar icons ---------- */

const Win = () => (
  <svg width="36" height="36" viewBox="0 0 36 36">
    <defs>
      <linearGradient id="win" x2="1" y2="1"><stop stopColor="#7fdcff" /><stop offset="1" stopColor="#0f93f8" /></linearGradient>
    </defs>
    <path fill="url(#win)" d="M0 0h17v17H0zM19 0h17v17H19zM0 19h17v17H0zM19 19h17v17H19z" />
  </svg>
);
const Search = () => (
  <svg width="34" height="36" viewBox="0 0 34 36">
    <path d="M2 34l9-10" stroke="#e4dfe0" strokeWidth="4" strokeLinecap="round" />
    <circle cx="19" cy="15" r="13" fill="#683845" stroke="#efeced" strokeWidth="3" />
  </svg>
);
const TaskView = () => (
  <svg width="38" height="36" viewBox="0 0 38 36">
    <rect x="9" width="29" height="25" rx="2" fill="#f2f0f1" />
    <rect y="9" width="28" height="26" rx="2" fill="#5f585b" />
    <path d="M9 9h19v16H9z" fill="#aba6a8" />
  </svg>
);
const Chat = () => (
  <svg width="36" height="36" viewBox="0 0 36 36">
    <path d="M18 0a18 18 0 11-8 34l-9 1 2-8A18 18 0 0118 0z" fill="#6469cf" />
    <path d="M8 11h14v14H8zM24 16l5-4v12l-5-4z" fill="#fff" />
  </svg>
);
const Edge = () => (
  <svg width="36" height="36" viewBox="0 0 36 36">
    <defs>
      <linearGradient id="eg" x2="1" y2=".4"><stop stopColor="#26a8e0" /><stop offset=".6" stopColor="#35c6c9" /><stop offset="1" stopColor="#6ae352" /></linearGradient>
    </defs>
    <path d="M0 18a18 18 0 0136-1c0 5-4 8-8 8-5 0-8-2-6-5 3-4-1-9-6-9C9 11 2 12 0 18z" fill="url(#eg)" />
    <path d="M0 18C1 9 15 6 19 14c-7 0-9 13 2 18 6 2 12-3 12-3A18 18 0 010 18z" fill="#1279cd" />
    <path d="M11 23c0-7 5-11 9-9-4 3-5 7-2 11 4 5 10 6 15 3-3 5-8 8-14 8-5-1-8-6-8-13z" fill="#0d56a4" />
  </svg>
);
const Explorer = () => (
  <svg width="36" height="33" viewBox="0 0 36 33">
    <path d="M0 2q0-2 2-2h10l4 4v8H0z" fill="#dc9a10" />
    <path d="M0 7h14l3-3h17q2 0 2 2v27H0z" fill="#ffcf48" />
    <path d="M6 33v-7q0-4 4-4h16q4 0 4 4v7z" fill="#1372bf" />
    <path d="M11 28h14" stroke="#0a477e" strokeWidth="2" />
  </svg>
);
const Mail = () => (
  <svg width="36" height="34" viewBox="0 0 36 34">
    <path d="M0 10L18 0l18 10v12H0z" fill="#12599c" />
    <path d="M5 6h26v10L18 24 5 15z" fill="#f4f7fa" />
    <path d="M0 10l18 13 18-13v24H0z" fill="#38b3ec" />
    <path d="M0 34l24-15 12 15z" fill="#1d8ad6" />
  </svg>
);
const Dropbox = styled.span`
  display: flex;
  width: 36px;
  height: 36px;
  align-items: center;
  justify-content: center;
  background: #0062ff;
  color: #fff;
`;
const Store = () => (
  <svg width="36" height="36" viewBox="0 0 36 36">
    <path d="M9 8V2h18v6" fill="none" stroke="#29abe2" strokeWidth="2.500" />
    <path d="M0 5h36v26q0 5-5 5H5q-5 0-5-5z" fill="#f4f4f4" />
    <path d="M9 8V4h18v4" fill="none" stroke="#29abe2" strokeWidth="1.500" />
    <path fill="#f25022" d="M10 13h7v7h-7z" /><path fill="#7fba00" d="M19 13h7v7h-7z" />
    <path fill="#00a4ef" d="M10 21h7v7h-7z" /><path fill="#ffb900" d="M19 21h7v7h-7z" />
  </svg>
);
const Bolt = () => (
  <svg width="18" height="36" viewBox="0 0 18 36">
    <path fill="#fff" d="M14.500 0L10 4l-1 8 4-3zM8 8l-7 5q-1 1 0 2l7 9 8 5q2-7-1-9L8 14zM11 22l-6 6L3 36l6-8z" />
    <path fill="#fff" d="M1 13l8-5v6l8 8-7 7v-6z" />
  </svg>
);
const Chrome = () => (
  <svg width="34" height="34" viewBox="0 0 34 34">
    <circle cx="17" cy="17" r="17" fill="#fbc116" />
    <path d="M2.300 8.500A17 17 0 0131.700 8.500H17z" fill="#e33b2e" />
    <path d="M2.300 8.500l7.400 12.800 7.300 4.200L13 33.500A17 17 0 012.300 8.500z" fill="#2a9b48" />
    <path d="M2.300 8.500h29.400L17 9l-7.400 12z" fill="#e33b2e" />
    <circle cx="17" cy="17" r="8" fill="#fff" />
    <circle cx="17" cy="17" r="6.400" fill="#3a7ff0" />
  </svg>
);
const AemApp = () => <Aem size={32} box />;
const Paint = () => (
  <svg width="36" height="36" viewBox="0 0 36 36">
    <path d="M20 1c10 0 15 7 14 16-1 10-7 18-14 17-5-1 0-8-5-9-4 0-4 4-9 2C-3 22 4 2 20 1z" fill="#3cb2e6" />
    <circle cx="11" cy="11" r="3.500" fill="#2ca33c" /><circle cx="19" cy="7" r="3.500" fill="#f6c522" />
    <circle cx="7" cy="19" r="3" fill="#d9472b" /><circle cx="19" cy="19" r="2.500" fill="#17486c" />
    <path d="M24 10h8l-2 9h-4z" fill="#f2e4c6" /><path d="M26 18h4v16h-4z" fill="#c97b27" />
  </svg>
);
const Snip = () => (
  <svg width="36" height="36" viewBox="0 0 36 36">
    <rect width="30" height="28" rx="3" fill="#f3f2f1" />
    <path d="M4 5h22M4 5v14" fill="none" stroke="#d1491c" strokeWidth="4" strokeDasharray="4 2" />
    <path d="M12 22h14M23 8v20" stroke="#8b9197" strokeWidth="3" />
    <circle cx="23" cy="31" r="3.500" fill="none" stroke="#2d9be0" strokeWidth="2.500" />
    <circle cx="32" cy="20" r="3" fill="none" stroke="#2d9be0" strokeWidth="2.500" />
  </svg>
);
const Eclipse = () => (
  <svg width="36" height="36" viewBox="0 0 36 36">
    <path d="M17 1A17 17 0 0017 35 18 18 0 0117 1z" fill="#f7941e" />
    <circle cx="20" cy="18" r="16" fill="#2c2255" />
    <path d="M4 13.500h32M3.500 18h33M4 22.500h32" stroke="#fff" strokeWidth="2" />
  </svg>
);
const Notepad = () => (
  <svg width="28" height="36" viewBox="0 0 28 36">
    <path d="M0 31h28v3q0 2-2 2H2q-2 0-2-2z" fill="#b9651a" />
    <path d="M0 3h28v28H0z" fill="#5ac8e2" />
    <path d="M5 11h18M5 17h18M5 23h18" stroke="#0f5f80" strokeWidth="2" />
    <path d="M4 0v5M10 0v5M17 0v5M24 0v5" stroke="#1a7391" strokeWidth="2.500" />
  </svg>
);
const DropboxIcon = () => (
  <Dropbox>
    <FaDropbox size={22} />
  </Dropbox>
);
const apps: { label: string; icon: React.FC; run?: boolean; on?: boolean; badge?: string }[] = [
  { label: "Start", icon: Win },
  { label: "Search", icon: Search },
  { label: "Task view", icon: TaskView },
  { label: "Chat", icon: Chat },
  { label: "Edge", icon: Edge, run: true },
  { label: "File Explorer", icon: Explorer, run: true },
  { label: "Mail", icon: Mail, badge: "99+" },
  { label: "Dropbox", icon: DropboxIcon },
  { label: "Store", icon: Store },
  { label: "Swift", icon: Bolt },
  { label: "Chrome", icon: Chrome, run: true, on: true },
  { label: "AEM", icon: AemApp, run: true },
  { label: "Paint", icon: Paint, run: true },
  { label: "Snipping Tool", icon: Snip, run: true },
  { label: "Eclipse", icon: Eclipse, run: true },
  { label: "Notepad", icon: Notepad, run: true },
];

/* ---------- sections ---------- */

const Browser = () => (
  <>
    <TabStrip>
      <PinnedTab aria-label="Adobe"><Adobe /></PinnedTab>
      <ActiveTab>
        <button aria-label="Close tab">{stroke("M1.500 1.500l11 11M12.500 1.500l-11 11", 14, 2, "#3c4043", 14)}</button>
      </ActiveTab>
      <TabGroup $w={375}>
        {wideTabs.map((Icon, i) => <BrowserTab key={i} aria-label={`Tab ${i + 2}`}><Icon /></BrowserTab>)}
      </TabGroup>
      <TabGroup $w={1044}>
        {narrowTabs.map((Icon, i) => <BrowserTab key={i} aria-label={`Tab ${i + 12}`}><Icon /></BrowserTab>)}
      </TabGroup>
      <NewTab aria-label="New tab">{stroke("M9 0v18M0 9h18", 18, 2.600, "#3c4043", 18)}</NewTab>
      <WindowControls>
        <WindowButton aria-label="Search tabs">{stroke("M1 4l7 8 7-8", 16, 1.200, "#222", 16)}</WindowButton>
        <WindowButton aria-label="Minimize">{stroke("M0 8h16", 16, 1.300, "#000", 16)}</WindowButton>
        <WindowButton aria-label="Restore">{stroke("M.7 4.500h11v11H.7zM4 4V.7h11.300V12H12", 16, 1.300, "#000", 16)}</WindowButton>
        <WindowButton aria-label="Close">{stroke("M.5.5l15 15M15.500.5l-15 15", 16, 1.200, "#000", 16)}</WindowButton>
      </WindowControls>
    </TabStrip>
    <AddressRow>
      <NavButtons>
        <button aria-label="Back">{stroke("M22 12H3M12 3l-9 9 9 9", 24, 2.200, "#55585c")}</button>
        <button aria-label="Forward">{stroke("M2 12h19M12 3l9 9-9 9", 24, 2.200, "#bcbec1")}</button>
        <button aria-label="Reload">
          <svg width="24" height="24" viewBox="0 0 24 24">
            <path d="M18.500 6A8.700 8.700 0 1019.500 15" fill="none" stroke="#55585c" strokeWidth="2.300" />
            <path d="M21 2v8.500h-8.500z" fill="#55585c" />
          </svg>
        </button>
      </NavButtons>
      <Omnibox>
        <svg width="22" height="22" viewBox="0 0 22 22">
          <circle cx="11" cy="11" r="9.500" fill="none" stroke="#5f6368" strokeWidth="2" />
          <path d="M11 9.500V16M11 5.500V8" stroke="#5f6368" strokeWidth="2.200" />
        </svg>
        <Url>
          <UrlHost>localhost</UrlHost>:7070/crx/de/index.jsp#/etc/acs-commons/lists/cities/jcr%3Acontent/list/item0
        </Url>
        <OmniActions>
          <button aria-label="Share">{stroke("M2 8v13.500h16V18M6 17q1-9 10-9V3l7 7-7 6.500V12q-6 0-10 5z", 24, 1.700, "#5f6368")}</button>
          <button aria-label="Bookmark">{stroke("M12 3l2.700 6.300 6.800.6-5.200 4.500 1.600 6.700-5.900-3.600-5.900 3.600 1.600-6.700L2.500 9.900l6.800-.6z", 24, 2, "#5f6368")}</button>
        </OmniActions>
      </Omnibox>
      <SideIcon aria-label="Side panel">
        <svg width="22" height="22" viewBox="0 0 22 22">
          <path d="M1.500 1.500h19v19h-19z" fill="#fff" stroke="#5f6368" strokeWidth="3" />
          <path d="M14 1h7v20h-7z" fill="#5f6368" />
        </svg>
      </SideIcon>
      <Profile>
        <Avatar>P</Avatar>Paused
      </Profile>
      <button aria-label="Menu">
        <svg width="12" height="22" viewBox="0 0 12 22" fill="#55585c">
          <circle cx="6" cy="3" r="2.300" /><circle cx="6" cy="11" r="2.300" /><circle cx="6" cy="19" r="2.300" />
        </svg>
      </button>
    </AddressRow>
  </>
);

const Logo = () => (
  <svg width="48" height="38" viewBox="0 0 48 38">
    <circle cx="31" cy="17" r="15" fill="#6fb6e0" stroke="#e4f5ff" strokeWidth="1.500" />
    <path d="M33 3q8 6 8 14t-6 13M38 5q4 5 4 11t-4 10M30 8q8 4 15 3M32 14q7 3 14 2M34 22q6 2 10 1M34 3q-3 4-2 9M29 30q6 1 12-4" fill="none" stroke="#e9f7ff" strokeWidth="1.500" />
    <path d="M5 13C7 4 16 0 25 2c6 2 8 7 5 9-3 1-5-2-8-1-5 2-4 6 1 7 4 1 8-2 10 2 2 3 3 7-1 9l-5 1-1 7h-5v-4h-4v4h-6v-5l-4 1v3H3V18H0v-5z" fill="#2db6e2" stroke="#125e88" strokeWidth="1.200" />
    <path d="M10 14q2-7 9-8M18 19q-2-6 4-9" fill="none" stroke="#8fe6fa" strokeWidth="2" />
    <circle cx="27" cy="22" r="1.800" fill="#fff" stroke="#125e88" />
  </svg>
);

const Header = () => (
  <>
    <CrxHeader>
      <Brand>
        <Logo />
        <BrandRule $h={34} $l={13} $r={15} />
        <BrandStrong>CRX</BrandStrong>DE
        <BrandRule $h={20} $l={10} $r={8} />
        Lite
      </Brand>
      <ModeTile $on aria-label="Development"><Tools /></ModeTile>
      <ModeTile aria-label="Packages"><Box3d /></ModeTile>
    </CrxHeader>
    <Toolbar>
      <Refresh />
      <ToolButton $l={14}>Save All<Caret /></ToolButton>
      <Sep />
      <ToolButton $r={8}>Create ...<Caret /></ToolButton>
      <ToolButton $l={10}>Delete</ToolButton>
      <Sep />
      <ToolButton $r={9}>Copy</ToolButton>
      <ToolButton disabled $l={9} $r={10}>Paste</ToolButton>
      <ToolButton $l={9} $r={11}>Move ...</ToolButton>
      <ToolButton $l={9}>Rename ...</ToolButton>
      <Sep />
      <ToolButton disabled>Overlay Node ...</ToolButton>
      <Sep />
      <ToolButton>Mixins ...</ToolButton>
      <Sep />
      <ToolButton>Tools<Caret /></ToolButton>
      <Spacer />
      <ToolButton $r={0}>Administrator@crx.default<Caret /></ToolButton>
    </Toolbar>
    <PathRow onSubmit={(e) => e.preventDefault()}>
      <PathInput aria-label="Path" defaultValue="/etc/acs-commons/lists/cities/jcr:content/list/item0" />
      <PathGo aria-label="Search"><Magnifier /></PathGo>
    </PathRow>
  </>
);

const Arrow = ({ d, c = "#505050" }: { d: string; c?: string }) => (
  <svg width="12" height="12" viewBox="0 0 12 12"><path d={d} fill={c} /></svg>
);

const Tree = () => (
  <Panel $w={574}>
    <PanelHeader>
      <HeaderTool aria-label="Find"><Binoculars size={15} /></HeaderTool>
      <HeaderTool aria-label="Collapse"><Chevrons /></HeaderTool>
    </PanelHeader>
    <TreeBody>
      <TreeList>
        {nodes.map((n) => {
          const Icon = n.icon;
          return (
            <TreeRow key={n.name} $on={n.name === "item0"}>
              {Array.from({ length: n.depth }, (_, i) => <Guide key={i} $line={i < 4} />)}
              <Guide $line $half={n.last}>
                {n.leaf ? <Stub /> : (
                  <button aria-label={`${n.open ? "Collapse" : "Expand"} ${n.name}`}><Expander open={n.open} /></button>
                )}
              </Guide>
              <NodeIcon><Icon /></NodeIcon>
              <NodeLabel href={`#${n.name}`}>{n.name}</NodeLabel>
            </TreeRow>
          );
        })}
      </TreeList>
      <VScroll>
        <Arrow d="M0 9h12L6 2z" />
        <VTrack $f={448} />
        <VThumb />
        <VTrack $f={148} />
        <Arrow d="M0 3h12l-6 7z" />
      </VScroll>
    </TreeBody>
  </Panel>
);

const Cross = () => stroke("M1.500 1.500l7 7M8.500 1.500l-7 7", 10, 2.800, "#5a9ccc", 10);

const Editor = () => (
  <Panel>
    <TabBar>
      <PageTab $w={269}><TabLabel><House />Home</TabLabel></PageTab>
      <PageTab $w={269} $on>
        <TabLabel $on><Doc />app.html</TabLabel>
        <CloseTab aria-label="Close app.html"><Cross /></CloseTab>
      </PageTab>
      <PageTab $w={269}>
        <TabLabel><Doc />pageinformation.html</TabLabel>
        <CloseTab aria-label="Close pageinformation.html"><Cross /></CloseTab>
      </PageTab>
    </TabBar>
    <Strip $h={5} />
    <EditorTools>
      <button aria-label="Show in tree"><TreeDoc /></button>
      <button aria-label="Find in file"><Binoculars /></button>
    </EditorTools>
    <EditorRest />
  </Panel>
);

const InnerTab = styled(PageTab)`
  padding: 0 2px 2px 14px;
`;

const Properties = () => (
  <Panel $grow>
    <PanelHeader>
      <HeaderTool aria-label="Collapse panel"><Chevrons r={-90} /></HeaderTool>
    </PanelHeader>
    <TabBar>
      {["Properties", "Access Control", "Replication", "Console", "Build Info"].map((t, i) => (
        <InnerTab key={t} $w={179} $on={i === 0}><TabLabel $on={i === 0}>{t}</TabLabel></InnerTab>
      ))}
    </TabBar>
    <Strip $h={4} />
    <GridArea>
      <Grid>
        <thead>
          <tr>
            <HeadCell $w={36} aria-label="Row" />
            <HeadCell $w={210} $sorted>Name<SortMark /></HeadCell>
            <HeadCell $w={210}>Type</HeadCell>
            <HeadCell>Value</HeadCell>
            <HeadCell $w={120}>Protected</HeadCell>
            <HeadCell $w={120}>Mandatory</HeadCell>
          </tr>
        </thead>
        <tbody>
          {rows.map((r, i) => (
            <GridRow key={r[0]} $alt={i === 1} $muted={i === 0}>
              <NumCell>{i + 1}</NumCell>
              {r.map((c, j) => <Cell key={j}>{c}</Cell>)}
            </GridRow>
          ))}
        </tbody>
      </Grid>
    </GridArea>
    <HScroll>
      <Arrow d="M8 0v12L2 6z" c="#a3a3a3" />
      <HTrack><HThumb /></HTrack>
      <Arrow d="M5 0v12l6-6z" />
    </HScroll>
    <PropForm onSubmit={(e) => e.preventDefault()}>
      <FieldLabel htmlFor="prop-name">Name</FieldLabel>
      <Field id="prop-name" $w={231} />
      <FieldLabel htmlFor="prop-type">Type</FieldLabel>
      <SelectBox>
        <Select id="prop-type" defaultValue="String"><option>String</option></Select>
        <SelectTrigger>{stroke("M1.500 3l5.500 6 5.500-6", 14, 3.200, "#2a6aa8", 14)}</SelectTrigger>
      </SelectBox>
      <FieldLabel htmlFor="prop-value">Value</FieldLabel>
      <Field id="prop-value" />
      <ToolButton type="button" $l={5} $r={6}>Multi</ToolButton>
      <Sep />
      <AddButton>
        <svg width="24" height="24" viewBox="0 0 24 24">
          <circle cx="12.500" cy="13" r="10.500" fill="#777" opacity=".6" />
          <circle cx="11.500" cy="11.500" r="10.500" fill="#69b35c" stroke="#3f8a3b" />
          <path d="M11.500 6.500v10M6.500 11.500h10" stroke="#fff" strokeWidth="3" />
        </svg>
        Add
      </AddButton>
      <MoreButton type="button" aria-label="More"><Chevrons r={180} /></MoreButton>
    </PropForm>
  </Panel>
);

const Desktop = () => (
  <Taskbar>
    <Weather>
      <svg width="38" height="28" viewBox="0 0 38 28">
        <path d="M8 27a8 8 0 01-1-15.500A11.500 11.500 0 0129 10a8.800 8.800 0 011 17z" fill="#c9dbf2" />
        <path d="M10 13q7-6 12 1 5-6 11 1 3 8-4 10H9q-6-2-4-8z" fill="#e6effa" />
      </svg>
      <span>29°C<Dim>Cloudy</Dim></span>
    </Weather>
    {apps.map(({ label, icon: Icon, run, on, badge }) => (
      <AppButton key={label} aria-label={label} $on={on}>
        <Icon />
        {badge && <Badge>{badge}</Badge>}
        {run && <Running $on={on} />}
      </AppButton>
    ))}
    <Tray>
      <TrayButton $w={36} aria-label="Hidden icons">{stroke("M1 14l9-9 9 9", 20, 1.800, "#fff", 20)}</TrayButton>
      <TrayButton $w={36} aria-label="Teams">
        <svg width="24" height="22" viewBox="0 0 24 22">
          <circle cx="13" cy="3.500" r="3.500" fill="#7b83eb" /><circle cx="20" cy="4.500" r="2.500" fill="#5059c9" />
          <path d="M17 8h6v7q0 3-4 3h-2z" fill="#5059c9" /><path d="M7 8h12v8q-1 6-6 6-5-1-6-6z" fill="#7b83eb" />
          <path d="M0 5h12v12H0z" fill="#4b53bc" /><path d="M3 8h6M6 8v7" stroke="#fff" strokeWidth="1.800" />
        </svg>
      </TrayButton>
      <TrayButton $w={36} aria-label="OneDrive">
        <svg width="26" height="24" viewBox="0 0 26 24">
          <path d="M4 17a5 5 0 010-8 8 8 0 0115-2 6 6 0 013 10z" fill="#8d8388" /><path d="M3 18a5 5 0 011-9l6 1 8 8z" fill="#eeeaec" />
          <circle cx="18" cy="16" r="7" fill="#d3202f" /><path d="M15 13l6 6M21 13l-6 6" stroke="#fff" strokeWidth="1.500" />
        </svg>
      </TrayButton>
      <TrayButton $w={48} aria-label="Microphone">
        <svg width="18" height="26" viewBox="0 0 18 26" fill="none" stroke="#7fd0ee" strokeWidth="1.700">
          <rect x="5.500" y="1" width="7" height="15" rx="3.500" /><path d="M1.500 12q0 8 7.500 8t7.500-8M9 20v5" />
        </svg>
      </TrayButton>
      <TrayButton $w={67}><span>ENG<br />IN</span></TrayButton>
      <TrayButton $w={46} aria-label="Network">
        <svg width="24" height="20" viewBox="0 0 24 20" fill="none" stroke="#fff" strokeWidth="1.800">
          <path d="M1 8q11-12 22 0M4.500 11.500q7.500-8 15 0M8 15q4-4 8 0" /><circle cx="12" cy="17.500" r="1.500" fill="#fff" />
        </svg>
      </TrayButton>
      <TrayButton $w={36} aria-label="Volume">
        <svg width="26" height="22" viewBox="0 0 26 22" fill="none" stroke="#fff" strokeWidth="1.600">
          <path d="M1 8h4l6-5v16l-6-5H1zM14 8q2 3 0 6M17.500 5q4 6 0 12M21 2q6.500 9 0 18" />
        </svg>
      </TrayButton>
      <TrayButton $w={36} aria-label="Battery">
        <svg width="24" height="20" viewBox="0 0 24 20">
          <path d="M7 5h13v13H5v-6" fill="none" stroke="#fff" strokeWidth="2" /><path d="M8 8h10v8H8zM21 9h3v5h-3z" fill="#fff" />
          <path d="M0 2h8v5q-1 3-4 3T0 7zM1.500 0v3M6.500 0v3" fill="#fff" stroke="#fff" />
        </svg>
      </TrayButton>
      <Clock>04:53 PM<br />23-07-2022</Clock>
      <Notice>2</Notice>
    </Tray>
  </Taskbar>
);

export default function App() {
  return (
    <>
      <GlobalStyle />
      <Screen>
        <Browser />
        <Header />
        <Work>
          <Tree />
          <RightColumn>
            <Editor />
            <Properties />
          </RightColumn>
        </Work>
        <Desktop />
      </Screen>
    </>
  );
}
